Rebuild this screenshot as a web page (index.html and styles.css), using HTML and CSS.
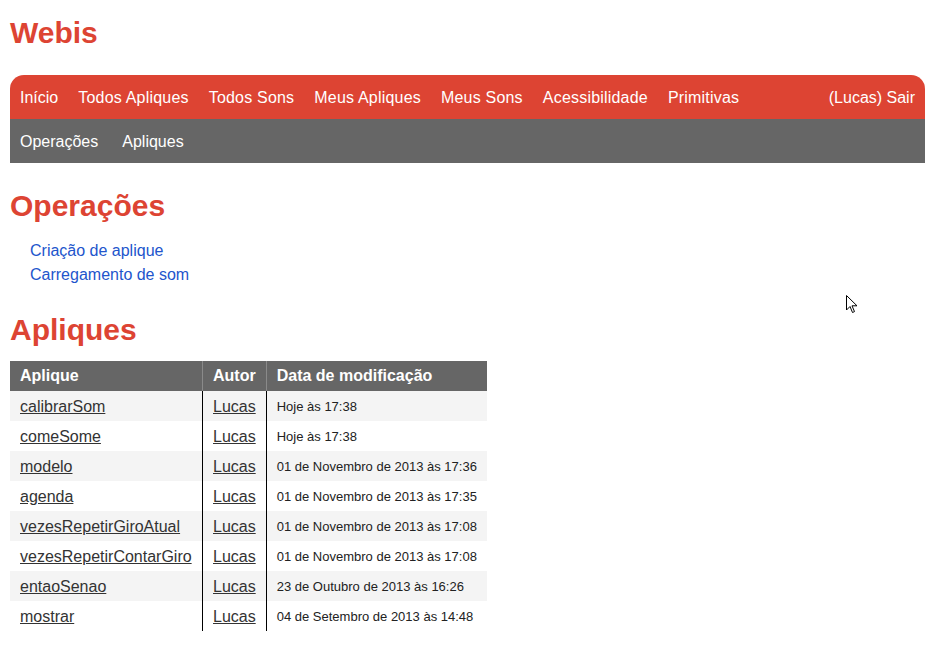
FILE: index.html
```html
<!DOCTYPE html>
<html lang="pt">
<head>
<meta charset="utf-8">
<title>Webis</title>
<link rel="stylesheet" href="styles.css">
</head>
<body>
<div class="page">
  <h1 class="title">Webis</h1>
  <nav class="mainnav">
    <a href="#">Início</a>
    <a href="#">Todos Apliques</a>
    <a href="#">Todos Sons</a>
    <a href="#">Meus Apliques</a>
    <a href="#">Meus Sons</a>
    <a href="#">Acessibilidade</a>
    <a href="#">Primitivas</a>
    <a href="#" class="right">(Lucas) Sair</a>
  </nav>
  <nav class="subnav">
    <a href="#">Operações</a>
    <a href="#">Apliques</a>
  </nav>
  <h2 class="section first">Operações</h2>
  <ul class="ops">
    <li><a href="#">Criação de aplique</a></li>
    <li><a href="#">Carregamento de som</a></li>
  </ul>
  <h2 class="section">Apliques</h2>
  <table class="list">
    <thead>
      <tr><th class="c1">Aplique</th><th class="c2">Autor</th><th class="c3">Data de modificação</th></tr>
    </thead>
    <tbody>
      <tr><td><a href="#">calibrarSom</a></td><td><a href="#">Lucas</a></td><td class="date">Hoje às 17:38</td></tr>
      <tr><td><a href="#">comeSome</a></td><td><a href="#">Lucas</a></td><td class="date">Hoje às 17:38</td></tr>
      <tr><td><a href="#">modelo</a></td><td><a href="#">Lucas</a></td><td class="date">01 de Novembro de 2013 às 17:36</td></tr>
      <tr><td><a href="#">agenda</a></td><td><a href="#">Lucas</a></td><td class="date">01 de Novembro de 2013 às 17:35</td></tr>
      <tr><td><a href="#">vezesRepetirGiroAtual</a></td><td><a href="#">Lucas</a></td><td class="date">01 de Novembro de 2013 às 17:08</td></tr>
      <tr><td><a href="#">vezesRepetirContarGiro</a></td><td><a href="#">Lucas</a></td><td class="date">01 de Novembro de 2013 às 17:08</td></tr>
      <tr><td><a href="#">entaoSenao</a></td><td><a href="#">Lucas</a></td><td class="date">23 de Outubro de 2013 às 16:26</td></tr>
      <tr><td><a href="#">mostrar</a></td><td><a href="#">Lucas</a></td><td class="date">04 de Setembro de 2013 às 14:48</td></tr>
    </tbody>
  </table>
</div>
<svg class="cursor" width="12" height="20" viewBox="0 0 12 20" aria-hidden="true">
  <path d="M0.5 0.5 L0.5 15 L4 11.5 L6.5 17.5 L8.5 16.6 L6 10.8 L11 10.8 Z" fill="#fff" stroke="#000" stroke-width="1" stroke-linejoin="miter"/>
</svg>
</body>
</html>
```
FILE: styles.css
```css
html, body {
  margin: 0;
  padding: 0;
  background: #fff;
}
body {
  font-family: "Liberation Sans", Arial, sans-serif;
  font-size: 16px;
  color: #222;
}
.page {
  width: 915px;
  padding: 0 10px;
}
.title {
  margin: 15px 0 24px;
  font-size: 30px;
  line-height: 36px;
  font-weight: bold;
  color: #dd4433;
}
.mainnav, .subnav {
  display: flex;
  height: 44px;
  align-items: center;
}
.mainnav {
  background: #dd4433;
  border-radius: 14px 14px 0 0;
}
.subnav {
  background: #666666;
}
.mainnav a, .subnav a {
  color: #fff;
  text-decoration: none;
  padding: 2px 10px 0;
  line-height: 42px;
}
.mainnav a {
  letter-spacing: 0.2px;
}
.mainnav a:first-child {
  letter-spacing: 0;
}
.subnav a {
  padding: 2px 14px 0 10px;
}
.mainnav .right {
  margin-left: auto;
  padding-right: 10px;
  letter-spacing: 0;
}
.section {
  margin: 0;
  font-size: 30px;
  line-height: 36px;
  font-weight: bold;
  color: #dd4433;
}
.section.first {
  margin-top: 25px;
}
.ops {
  list-style: none;
  margin: 15px 0 25px;
  padding: 0 0 0 20px;
}
.ops li {
  line-height: 24px;
}
.ops a {
  color: #2255cc;
  text-decoration: none;
}
.list {
  margin-top: 13px;
  border-collapse: collapse;
  border-spacing: 0;
}
.list th {
  background: #666666;
  color: #fff;
  font-weight: bold;
  text-align: left;
  height: 30px;
  padding: 0 10px;
  line-height: 30px;
}
.list th.c1 { width: 172px; }
.list th.c2, .list th.c3 {
  border-left: 1px solid #8a8a8a;
}
.list th.c3 { width: 200px; }
.list td {
  height: 30px;
  padding: 1px 10px 0;
  line-height: 29px;
  white-space: nowrap;
  box-sizing: border-box;
}
.list td + td {
  border-left: 1px solid #000;
}
.list tbody tr:nth-child(odd) td {
  background: #f4f4f4;
}
.list td a {
  color: #333;
  text-decoration: underline;
}
.list td.date {
  font-size: 13px;
  color: #222;
}
.cursor {
  position: absolute;
  left: 846px;
  top: 295px;
}
```
